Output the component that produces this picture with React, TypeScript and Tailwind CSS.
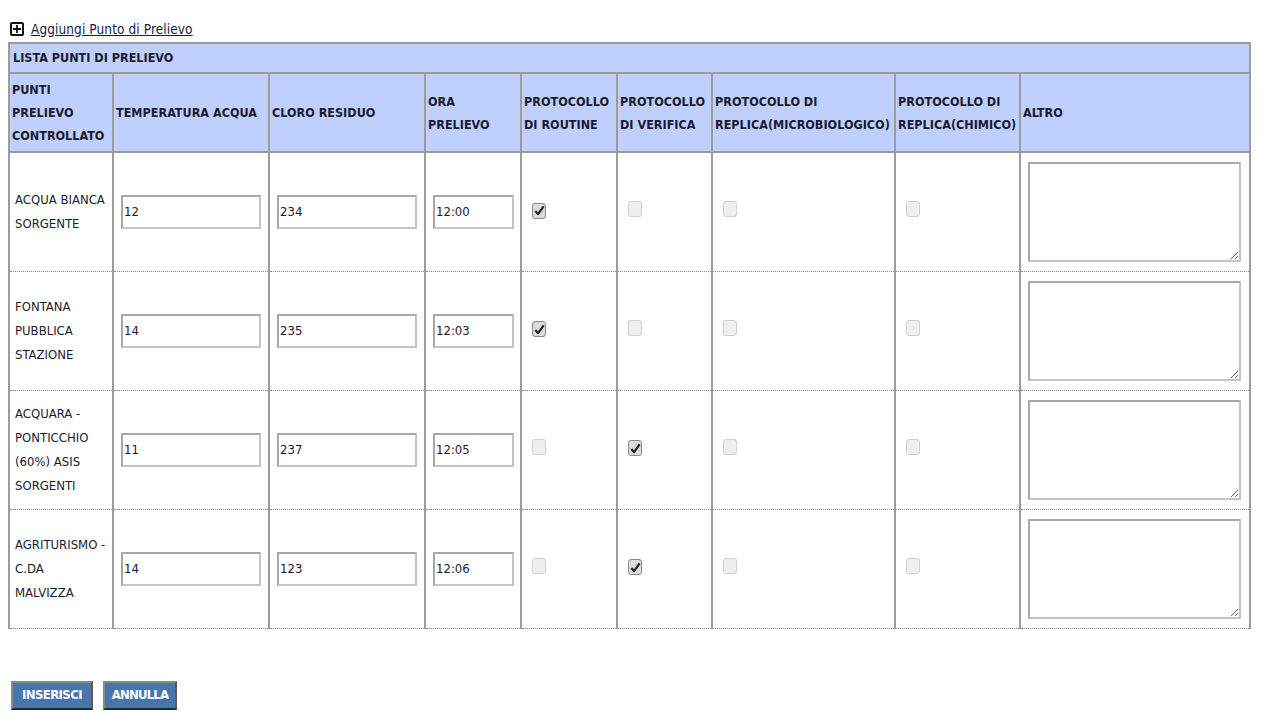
import React from "react";

type Row = {
  nome: string[];
  temp: string;
  cloro: string;
  ora: string;
  routine: boolean;
  verifica: boolean;
};

const rows: Row[] = [
  { nome: ["ACQUA BIANCA", "SORGENTE"], temp: "12", cloro: "234", ora: "12:00", routine: true, verifica: false },
  { nome: ["FONTANA", "PUBBLICA", "STAZIONE"], temp: "14", cloro: "235", ora: "12:03", routine: true, verifica: false },
  { nome: ["ACQUARA -", "PONTICCHIO", "(60%) ASIS", "SORGENTI"], temp: "11", cloro: "237", ora: "12:05", routine: false, verifica: true },
  { nome: ["AGRITURISMO -", "C.DA", "MALVIZZA"], temp: "14", cloro: "123", ora: "12:06", routine: false, verifica: true },
];

const headers: string[][] = [
  ["PUNTI", "PRELIEVO", "CONTROLLATO"],
  ["TEMPERATURA ACQUA"],
  ["CLORO RESIDUO"],
  ["ORA", "PRELIEVO"],
  ["PROTOCOLLO", "DI ROUTINE"],
  ["PROTOCOLLO", "DI VERIFICA"],
  ["PROTOCOLLO DI", "REPLICA(MICROBIOLOGICO)"],
  ["PROTOCOLLO DI", "REPLICA(CHIMICO)"],
  ["ALTRO"],
];

// finta checkbox grigia, come nello screenshot
function Check({ checked }: { checked: boolean }) {
  if (checked) {
    return (
      <span className="inline-flex items-center justify-center w-[14px] h-[16px] rounded-[3px] border border-[#8a8a8a] bg-[#dcdcdc]">
        <svg width="11" height="11" viewBox="0 0 12 12">
          <path d="M1.5 6.5 L4.5 10 L10.5 1.5" fill="none" stroke="#222" strokeWidth="2.4" strokeLinejoin="round" />
        </svg>
      </span>
    );
  }
  return <span className="inline-block w-[14px] h-[16px] rounded-[3px] border border-[#d0d0d0] bg-[#efefef]" />;
}

function Campo({ value, w }: { value: string; w: string }) {
  return (
    <input
      readOnly
      value={value}
      className={`${w} h-[34px] border-2 border-[#c4c4c4] border-t-[#a8a8a8] border-l-[#a8a8a8] bg-white px-[1px] text-[13px] text-[#1a1a2e] outline-none`}
    />
  );
}

export default function App() {
  return (
    <div className="min-h-[711px] bg-white pl-[8px] pt-[20px] text-[#1a1a2e] font-['DejaVu_Sans_Condensed','DejaVu_Sans',sans-serif] text-[13px]">
      <div className="flex items-center gap-[7px] pl-[2px] h-[18px]">
        <span className="flex items-center justify-center w-[14px] h-[14px] border-2 border-[#111] rounded-[2px]">
          <svg width="8" height="8" viewBox="0 0 8 8">
            <path d="M4 0 V8 M0 4 H8" stroke="#111" strokeWidth="1.8" />
          </svg>
        </span>
        <a className="underline text-[#1a1a4a] text-[13.5px] tracking-[0.1px]">Aggiungi Punto di Prelievo</a>
      </div>

      <table className="mt-[4px] w-[1241px] border-collapse table-fixed">
        <colgroup>
          <col className="w-[104px]" />
          <col className="w-[156px]" />
          <col className="w-[156px]" />
          <col className="w-[96px]" />
          <col className="w-[96px]" />
          <col className="w-[95px]" />
          <col className="w-[183px]" />
          <col className="w-[125px]" />
          <col className="w-[230px]" />
        </colgroup>
        <thead>
          <tr className="h-[30px] bg-[#bfd0fe]">
            <th colSpan={9} className="border-2 border-[#9c9c9c] px-[3px] text-left font-bold text-[12.5px]">
              LISTA PUNTI DI PRELIEVO
            </th>
          </tr>
          <tr className="h-[79px] bg-[#bfd0fe]">
            {headers.map((h, i) => (
              <th
                key={i}
                className="border-2 border-[#9c9c9c] px-[2px] text-left align-middle font-bold text-[12.5px] leading-[23px] whitespace-nowrap"
              >
                {h.map((l, j) => (
                  <div key={j}>{l}</div>
                ))}
              </th>
            ))}
          </tr>
        </thead>
        <tbody>
          {rows.map((r, i) => (
            <tr key={i} className="h-[119px] border-b border-dotted border-[#888]">
              <td className="border-x-2 border-[#9c9c9c] pl-[5px] pr-[2px] align-middle leading-[24px]">
                {r.nome.map((l, j) => (
                  <div key={j}>{l}</div>
                ))}
              </td>
              <td className="border-x-2 border-[#9c9c9c] pl-[7px] align-middle">
                <Campo value={r.temp} w="w-[140px]" />
              </td>
              <td className="border-x-2 border-[#9c9c9c] pl-[7px] align-middle">
                <Campo value={r.cloro} w="w-[140px]" />
              </td>
              <td className="border-x-2 border-[#9c9c9c] pl-[7px] align-middle">
                <Campo value={r.ora} w="w-[81px]" />
              </td>
              <td className="border-x-2 border-[#9c9c9c] pl-[10px] align-middle">
                <Check checked={r.routine} />
              </td>
              <td className="border-x-2 border-[#9c9c9c] pl-[10px] align-middle">
                <Check checked={r.verifica} />
              </td>
              <td className="border-x-2 border-[#9c9c9c] pl-[10px] align-middle">
                <Check checked={false} />
              </td>
              <td className="border-x-2 border-[#9c9c9c] pl-[10px] align-middle">
                <Check checked={false} />
              </td>
              <td className="border-x-2 border-[#9c9c9c] pl-[7px] align-middle">
                <textarea
                  readOnly
                  className="block w-[213px] h-[100px] border-2 border-[#c4c4c4] border-t-[#a8a8a8] border-l-[#a8a8a8] bg-white outline-none"
                />
              </td>
            </tr>
          ))}
        </tbody>
      </table>

      <div className="mt-[52px] flex gap-[10px] pl-[3px]">
        <button className="w-[82px] h-[29px] bg-[#4676ad] border-t-2 border-l-2 border-[#8a8a8a] border-b-2 border-r-2 border-b-[#1e2a3a] border-r-[#5a5a5a] text-white font-bold text-[13px] tracking-[-0.6px]">
          INSERISCI
        </button>
        <button className="w-[74px] h-[29px] bg-[#4676ad] border-t-2 border-l-2 border-[#8a8a8a] border-b-2 border-r-2 border-b-[#1e2a3a] border-r-[#5a5a5a] text-white font-bold text-[13px] tracking-[-0.8px]">
          ANNULLA
        </button>
      </div>
    </div>
  );
}
